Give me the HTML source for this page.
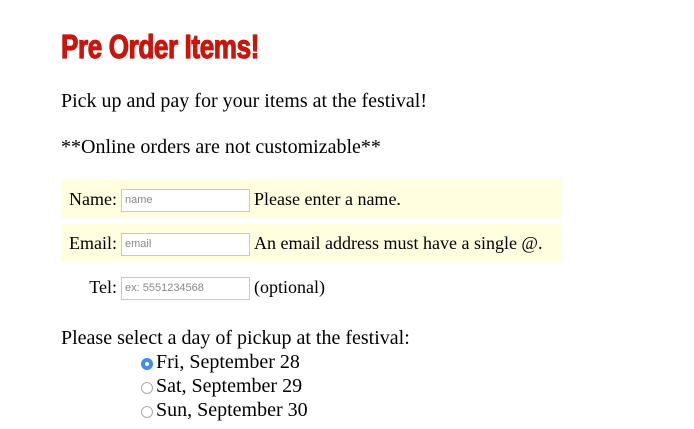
<!DOCTYPE html>
<html><head><style>
body{margin:0;width:694px;height:429px;background:#fff;font-family:"Liberation Serif",serif;font-size:20px;color:#000;position:relative;overflow:hidden}
.a{position:absolute;white-space:nowrap}
h1{position:absolute;left:61px;top:28px;margin:0;font-family:"Liberation Sans Narrow","Liberation Sans",sans-serif;font-stretch:condensed;font-weight:bold;font-size:33px;color:#c8160c;letter-spacing:-0.5px;transform:scaleX(0.79);transform-origin:left;-webkit-text-stroke:1.2px #c8160c}
.row{position:absolute;left:61px;width:500px;height:38px}
.y{background:#ffffdf}
.lab{position:absolute;right:444px;top:9px;font-size:18px}
.inp{position:absolute;left:60px;top:9px;border:1px solid #c8c8c8;background:#fff;font-family:"Liberation Sans",sans-serif;font-size:11px;color:#888;line-height:20px;padding-left:3px;box-sizing:border-box;width:129px;height:23px}
.msg{position:absolute;left:193px;top:9px;font-size:18px}
.r{position:absolute;left:141px;width:12px;height:12px;border-radius:50%;box-sizing:border-box;border:1px solid #aaa;background:#fff}
.on{background:#3b8ef0;border:none}
.on:after{content:"";position:absolute;left:4px;top:4px;width:4px;height:4px;border-radius:50%;background:#fff}
</style></head><body>
<h1>Pre Order Items!</h1>
<div class="a" style="left:61px;top:90px">Pick up and pay for your items at the festival!</div>
<div class="a" style="left:61px;top:136px">**Online orders are not customizable**</div>
<div class="row y" style="top:180px"><span class="lab">Name:</span><div class="inp">name</div><span class="msg">Please enter a name.</span></div>
<div class="row y" style="top:224px"><span class="lab">Email:</span><div class="inp">email</div><span class="msg">An email address must have a single @.</span></div>
<div class="row" style="top:268px"><span class="lab">Tel:</span><div class="inp">ex: 5551234568</div><span class="msg">(optional)</span></div>
<div class="a" style="left:61px;top:327px">Please select a day of pickup at the festival:</div>
<div class="r on" style="top:358px"></div><div class="a" style="left:156px;top:351px">Fri, September 28</div>
<div class="r" style="top:382px"></div><div class="a" style="left:156px;top:375px">Sat, September 29</div>
<div class="r" style="top:406px"></div><div class="a" style="left:156px;top:399px">Sun, September 30</div>
</body></html>
